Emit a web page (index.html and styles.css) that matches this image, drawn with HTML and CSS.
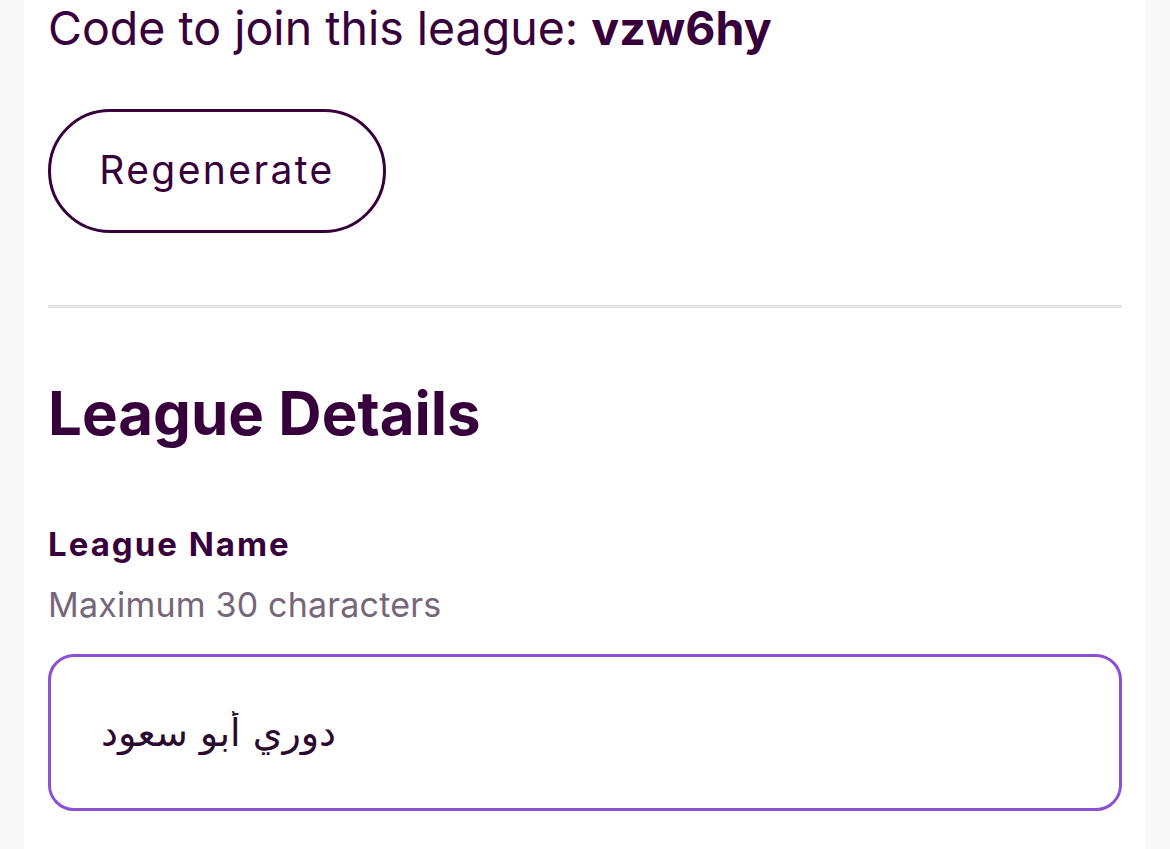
FILE: index.html
```html
<!DOCTYPE html>
<html lang="en">
<head>
<meta charset="utf-8">
<title>League Details</title>
<link rel="stylesheet" href="styles.css">
</head>
<body>
<main class="card">
  <p class="code-line">Code to join this league: <strong class="code">vzw6hy</strong></p>
  <button class="btn-outline" type="button">Regenerate</button>
  <hr class="divider">
  <h2 class="section-title">League Details</h2>
  <label class="field-label" for="league-name">League Name</label>
  <p class="field-hint">Maximum 30 characters</p>
  <input class="text-input" id="league-name" type="text" value="دوري أبو سعود">
</main>
</body>
</html>
```
FILE: styles.css
```css
html, body {
  margin: 0;
  padding: 0;
}
body {
  background: #f8f8f8;
  font-family: Inter, "Noto Sans", sans-serif;
  color: #37003c;
}
.card {
  background: #ffffff;
  margin: 0 24px;
  padding: 0 24px;
  min-height: 849px;
  box-sizing: border-box;
  display: flex;
  flex-direction: column;
  align-items: flex-start;
}
.code-line {
  margin: 0;
  font-size: 46.5px;
  line-height: 57px;
  font-weight: 400;
}
.code {
  font-weight: 700;
}
.btn-outline {
  margin-top: 52px;
  width: 338px;
  height: 124px;
  border: 3px solid #37003c;
  border-radius: 62px;
  background: #fff;
  color: #37003c;
  font-family: Inter, "Noto Sans", sans-serif;
  font-size: 39px;
  letter-spacing: 2.4px;
  padding: 0 0 4px;
}
.divider {
  align-self: stretch;
  margin: 72px 0 0;
  border: 0;
  height: 3px;
  background: #e6e3e8;
}
.section-title {
  margin: 68px 0 0;
  font-size: 60px;
  line-height: 74px;
  font-weight: 700;
}
.field-label {
  margin-top: 74px;
  font-size: 33px;
  line-height: 40px;
  font-weight: 700;
  letter-spacing: 2px;
}
.field-hint {
  margin: 20px 0 0;
  font-size: 34px;
  line-height: 41px;
  letter-spacing: 0.2px;
  color: #76667a;
}
.text-input {
  align-self: stretch;
  margin-top: 29px;
  height: 157px;
  box-sizing: border-box;
  border: 3px solid #8c50d2;
  border-radius: 26px;
  padding: 0 50px;
  font-family: "DejaVu Sans", "Noto Sans", sans-serif;
  font-size: 38px;
  font-weight: 500;
  color: #2a0a30;
  background: #fff;
  text-align: left;
  outline: none;
}
```
